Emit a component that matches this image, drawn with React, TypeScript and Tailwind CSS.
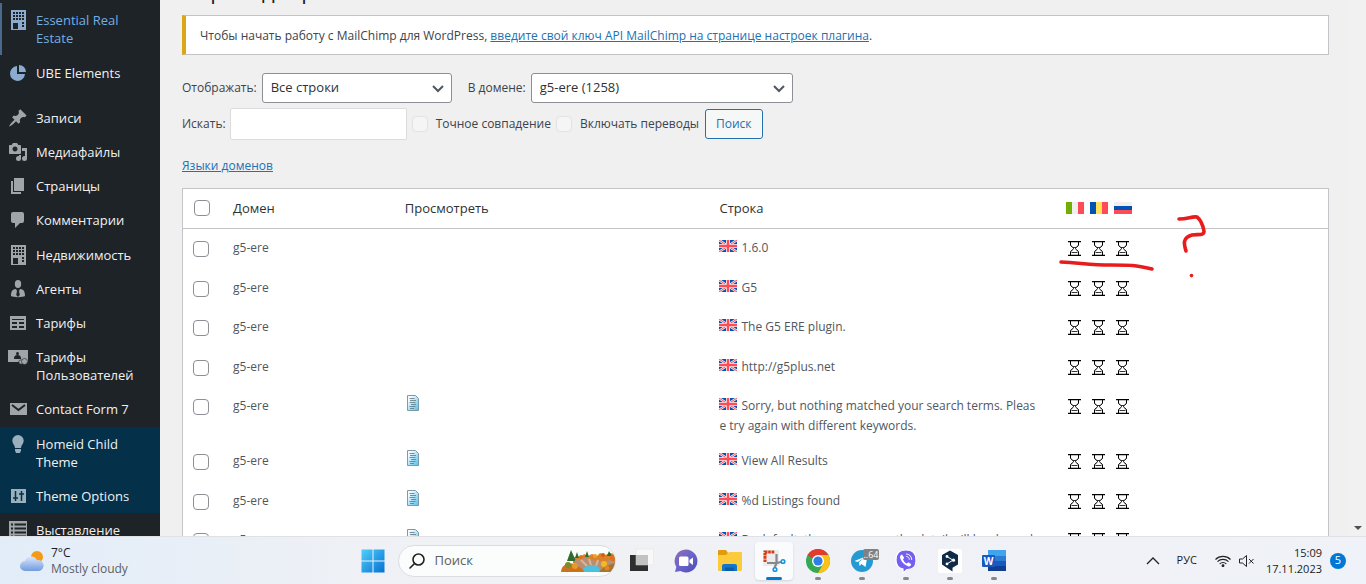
import React from "react"

type IconProps = { className?: string }

const BuildingIcon = ({ className }: IconProps) => (
  <svg viewBox="0 0 20 20" className={className} fill="currentColor" fillRule="evenodd">
    <path d="M3 0h15v20H3zM5 2v2h2V2zM8 2v2h2V2zM11 2v2h2V2zM14 2v2h2V2zM5 5v2h2V5zM8 5v2h2V5zM11 5v2h2V5zM14 5v2h2V5zM5 8v2h2V8zM8 8v2h2V8zM11 8v2h2V8zM14 8v2h2V8zM5 13v6h5v-6zM14 12v2h2v-2zM14 15v2h2v-2z" />
  </svg>
)

const PieIcon = ({ className }: IconProps) => (
  <svg viewBox="0 0 20 20" className={className} fill="currentColor">
    <path d="M9 3v8h8a7.500 7.500 0 1 1-8-8z" />
    <path d="M11 2a7 7 0 0 1 7 7h-7z" />
  </svg>
)

const PinIcon = ({ className }: IconProps) => (
  <svg viewBox="0 0 20 20" className={className} fill="currentColor">
    <path d="M10.440 3.020l1.820-1.820 6.360 6.350-1.830 1.820c-1.050-.680-2.480-.570-3.410.360l-.750.750c-.920.930-1.040 2.350-.350 3.410l-1.830 1.820-2.410-2.410-2.800 2.790c-.420.420-3.380 2.710-3.800 2.290s1.860-3.390 2.280-3.810l2.790-2.790L4.100 9.360l1.830-1.820c1.050.690 2.480.570 3.400-.360l.750-.750c.930-.920 1.050-2.350.360-3.410z" />
  </svg>
)

const MediaIcon = ({ className }: IconProps) => (
  <svg viewBox="0 0 20 20" className={className} fill="currentColor" fillRule="evenodd">
    <path d="M13 11V4c0-.550-.450-1-1-1h-1.670L9 1H5L3.670 3H2c-.550 0-1 .450-1 1v7c0 .550.450 1 1 1h10c.550 0 1-.450 1-1zM7 4.500c1.380 0 2.500 1.120 2.500 2.500S8.380 9.500 7 9.500 4.500 8.380 4.500 7 5.620 4.500 7 4.500z" />
    <path d="M14 6h5v10.500a2.500 2.500 0 1 1-2.500-2.500c.170 0 .340.020.500.050V9h-3z" />
    <path d="M13 13.050V14v2.500A2.500 2.500 0 1 1 10.500 14c.170 0 .340.020.500.050V13z" />
  </svg>
)

const PagesIcon = ({ className }: IconProps) => (
  <svg viewBox="0 0 20 20" className={className} fill="currentColor">
    <path d="M6 15V2h10v13zM5 16h8v2H3V5h2z" />
  </svg>
)

const CommentIcon = ({ className }: IconProps) => (
  <svg viewBox="0 0 20 20" className={className} fill="currentColor">
    <path d="M5 2h9q2 0 2 2v7q0 2-2 2h-2l-5 5v-5H5q-2 0-2-2V4q0-2 2-2z" />
  </svg>
)

const AgentIcon = ({ className }: IconProps) => (
  <svg viewBox="0 0 20 20" className={className} fill="currentColor">
    <ellipse cx="10" cy="5" rx="3.200" ry="4" />
    <path d="M3 17c0-4 1-7 5-7l1 2-.800 4L10 18l1.800-2L11 12l1-2c4 0 5 3 5 7-2 1.500-12 1.500-14 0z" />
  </svg>
)

const TableIcon = ({ className }: IconProps) => (
  <svg viewBox="0 0 20 20" className={className} fill="currentColor" fillRule="evenodd">
    <path d="M2 3h16v14H2zM4 6v1h12V6zM4 9v2h5V9zM11 9v2h5V9zM4 13v2h5v-2zM11 13v2h5v-2z" />
  </svg>
)

const UserCardIcon = ({ className }: IconProps) => (
  <svg viewBox="0 0 20 20" className={className}>
    <path fill="currentColor" d="M0 3h20v12H0z" />
    <circle cx="9.500" cy="6.500" r="1.500" fill="#1d2327" />
    <path fill="#1d2327" d="M6 12c0-3 1-4 3.500-4S13 9 13 12z" />
    <circle cx="13" cy="15" r="2.200" fill="currentColor" stroke="#1d2327" strokeWidth="0.600" />
    <circle cx="16.500" cy="14.500" r="3" fill="currentColor" stroke="#1d2327" strokeWidth="0.600" />
  </svg>
)

const MailIcon = ({ className }: IconProps) => (
  <svg viewBox="0 0 20 20" className={className}>
    <rect x="2" y="4" width="17" height="12" fill="currentColor" />
    <path d="M4 6l6.500 5L17 6" fill="none" stroke="#1d2327" strokeWidth="2" />
  </svg>
)

const BulbIcon = ({ className }: IconProps) => (
  <svg viewBox="0 0 20 20" className={className} fill="currentColor">
    <path d="M10 1a5.700 5.700 0 0 1 5.700 5.700c0 3-2.700 4.300-2.700 7.300H7c0-3-2.700-4.300-2.700-7.300A5.700 5.700 0 0 1 10 1zM7 15h6v1.500l-1 2.500H8l-1-2.500z" />
  </svg>
)

const SlidersIcon = ({ className }: IconProps) => (
  <svg viewBox="0 0 20 20" className={className}>
    <path fill="currentColor" d="M3 3h15v14H3z" />
    <path d="M7.500 5v10M5 12h5M13.500 5v10M11 8h5" fill="none" stroke="#043149" strokeWidth="1.500" />
  </svg>
)

const ListIcon = ({ className }: IconProps) => (
  <svg viewBox="0 0 20 20" className={className}>
    <path fill="currentColor" d="M1 1h18v18H1z" />
    <path d="M3 4.500h2M3 8.500h2M3 12.500h2M3 16.500h2M6.500 4.500H18M6.500 8.500H18M6.500 12.500H18M6.500 16.500H18" stroke="#1d2327" strokeWidth="2" />
  </svg>
)

interface MenuItem {
  label: string
  icon: React.FC<IconProps>
  link?: string
  iconColor?: string
  row?: string
}

const menu: MenuItem[] = [
  { label: "Essential Real Estate", icon: BuildingIcon, link: "text-[#72aee6]", iconColor: "text-[#8bacce]", row: "border-l-2 border-[#4a6a8c]" },
  { label: "UBE Elements", icon: PieIcon, iconColor: "text-[#8bacce]", row: "mt-px mb-[11px]" },
  { label: "Записи", icon: PinIcon },
  { label: "Медиафайлы", icon: MediaIcon },
  { label: "Страницы", icon: PagesIcon },
  { label: "Комментарии", icon: CommentIcon },
  { label: "Недвижимость", icon: BuildingIcon, row: "mt-px" },
  { label: "Агенты", icon: AgentIcon },
  { label: "Тарифы", icon: TableIcon },
  { label: "Тарифы Пользователей", icon: UserCardIcon },
  { label: "Contact Form 7", icon: MailIcon },
  { label: "Homeid Child Theme", icon: BulbIcon, iconColor: "text-[#9ab1bd]", row: "mt-px bg-[#043149]" },
  { label: "Theme Options", icon: SlidersIcon, iconColor: "text-[#9ab1bd]", row: "bg-[#043149]" },
  { label: "Выставление счетов", icon: ListIcon }
]

const Sidebar = () => (
  <nav className="w-40 shrink-0 overflow-hidden bg-[#1d2327] pt-[3px]">
    <ul>
      {menu.map(({ label, icon: Icon, link, iconColor, row }, i) => (
        <li key={i} className={row}>
          <a
            href="#"
            className={`flex gap-2 py-2 pr-4 text-[13px] leading-[18px] ${i === 0 ? "pl-1.5" : "pl-2"} ${link ?? "text-[#f0f0f1]"}`}
          >
            <Icon className={`-my-px size-5 shrink-0 ${iconColor ?? "text-[#a0a5aa]"}`} />
            <span>{label}</span>
          </a>
        </li>
      ))}
    </ul>
  </nav>
)

const UkFlag = () => (
  <svg viewBox="0 0 18 12" className="mr-1 inline-block h-3 w-[18px] align-baseline">
    <path fill="#0052b4" d="M0 0h18v12H0z" />
    <path d="M0 0l18 12M18 0L0 12" stroke="#f0f0f0" strokeWidth="2.400" />
    <path d="M0 0l18 12M18 0L0 12" stroke="#ff4b55" strokeWidth="1" />
    <path d="M9 0v12M0 6h18" stroke="#f0f0f0" strokeWidth="4" />
    <path d="M9 0v12M0 6h18" stroke="#ff4b55" strokeWidth="2.400" />
  </svg>
)

const Hourglass = () => (
  <svg viewBox="0 0 13 15" className="h-[15px] w-[13px]" fill="none" stroke="#000">
    <path d="M0 .5h13M0 14.500h13" strokeWidth="1.300" />
    <path d="M2.500 1v3c0 1.500 3 2 3 3.500s-3 2-3 3.500v3M10.500 1v3c0 1.500-3 2-3 3.500s3 2 3 3.500v3" />
    <path d="M3.500 11.500h6M5 6.500h3" strokeWidth="0.800" />
  </svg>
)

const DocIcon = () => (
  <svg viewBox="0 0 12 16" className="h-4 w-3">
    <defs>
      <linearGradient id="doc" x1="0" y1="0" x2="1" y2="1">
        <stop offset="0.200" stopColor="#f4fbfe" />
        <stop offset="1" stopColor="#4dbdf0" />
      </linearGradient>
    </defs>
    <path d="M.5.5h8l3 3v12H.5z" fill="url(#doc)" stroke="#7d9ba6" />
    <path d="M2.500 3.500h5M3 5.500h6M2.500 7.500h6M4 9.500h5M2.500 11.500h6M3 13.500h4" stroke="#5c7782" strokeWidth="0.800" />
  </svg>
)

const FlagButton = ({ title, colors, column }: { title: string; colors: string[]; column?: boolean }) => (
  <span title={title} className={`flex h-3 w-[18px] ${column ? "flex-col" : ""}`}>
    {colors.map((c) => (
      <span key={c} className={`flex-1 ${c}`} />
    ))}
  </span>
)

const checkbox = "block size-4 appearance-none rounded-[4px] border border-[#8c8f94] bg-white"

interface Row {
  text: string
  height: string
  view?: boolean
}

const rows: Row[] = [
  { text: "1.6.0", height: "h-[41px]" },
  { text: "G5", height: "h-[39px]" },
  { text: "The G5 ERE plugin.", height: "h-10" },
  { text: "http://g5plus.net", height: "h-[39px]" },
  { text: "Sorry, but nothing matched your search terms. Please try again with different keywords.", height: "h-[55px]", view: true },
  { text: "View All Results", height: "h-10", view: true },
  { text: "%d Listings found", height: "h-[39px]", view: true },
  { text: "By default, the message on the detail will be shown last", height: "h-10", view: true }
]

const StringsTable = () => (
  <div className="relative mt-3 border border-[#c3c4c7] bg-white">
    <table className="w-full table-fixed text-left">
      <thead>
        <tr className="h-[39px] border-b border-[#c3c4c7] text-[13px] text-[#2c3338]">
          <th className="w-10 pl-[11px]">
            <input type="checkbox" aria-label="Выбрать все" className={checkbox} />
          </th>
          <th className="w-[15%] pl-2.5 font-normal">Домен</th>
          <th className="w-[27.4%] pl-2.5 font-normal">Просмотреть</th>
          <th className="w-[30.3%] pl-[11px] font-normal">Строка</th>
          <th className="pl-[11px]">
            <div className="flex gap-1.5">
              <FlagButton title="Итальянский" colors={["bg-[#73af00]", "bg-[#f0f0f0]", "bg-[#ff4b55]"]} />
              <FlagButton title="Румынский" colors={["bg-[#0052b4]", "bg-[#ffe15a]", "bg-[#ff4b55]"]} />
              <FlagButton title="Русский" column colors={["bg-[#f0f0f0]", "bg-[#0052b4]", "bg-[#ff4b55]"]} />
            </div>
          </th>
        </tr>
      </thead>
      <tbody>
        {rows.map((row, i) => (
          <tr key={i} className={`align-top text-xs leading-5 text-[#50575e] ${row.height}`}>
            <td className="pt-3 pl-2.5">
              <input type="checkbox" aria-label={row.text} className={checkbox} />
            </td>
            <td className="pt-[9px] pl-2.5">g5-ere</td>
            <td className="pt-2 pl-3">{row.view && <DocIcon />}</td>
            <td className="pt-[9px] pr-4 pb-1.5 pl-[11px] break-all">
              <UkFlag />
              {row.text}
            </td>
            <td className="pt-3 pl-[13px]">
              <div className="flex gap-[11px]">
                <Hourglass />
                <Hourglass />
                <Hourglass />
              </div>
            </td>
          </tr>
        ))}
      </tbody>
    </table>
    {/* red pen marks over the language columns */}
    <svg
      viewBox="0 0 160 80"
      className="pointer-events-none absolute top-[19px] left-[76.400%] h-20 w-40"
      fill="none"
      stroke="#e81c1c"
      strokeWidth="3.600"
      strokeLinecap="round"
      strokeLinejoin="round"
    >
      <path d="M3 54c20 1 30 3 50 3s24 0 41 4" />
      <path d="M121 11c9 0 13-3 18-2 4 3 6 9 7 14 0 5-5 3-12 4-10 3-8 9-6 16" />
      <path d="M133.500 67.500v.1" />
    </svg>
  </div>
)

const SelectBox = ({ id, value, width }: { id: string; value: string; width: string }) => (
  <div className={`relative ml-[5px] ${width}`}>
    <select
      id={id}
      className="h-[30px] w-full appearance-none rounded-[3px] border border-[#8c8f94] bg-white pr-6 pl-2 text-[13px] text-[#2c3338]"
    >
      <option>{value}</option>
    </select>
    <svg viewBox="0 0 12 8" className="pointer-events-none absolute top-3 right-2 h-2 w-3" fill="none" stroke="#50575e" strokeWidth="2">
      <path d="M1 1l5 5 5-5" />
    </svg>
  </div>
)

const Filters = () => (
  <form className="mt-[18px] text-xs text-[#3c434a]">
    <div className="flex items-center">
      <label htmlFor="show">Отображать:</label>
      <SelectBox id="show" value="Все строки" width="w-[190px]" />
      <label htmlFor="domain" className="ml-4">
        В домене:
      </label>
      <SelectBox id="domain" value="g5-ere (1258)" width="w-[262px]" />
    </div>
    <div className="mt-[5px] flex items-center">
      <label htmlFor="search">Искать:</label>
      <input id="search" type="text" className="ml-1 h-8 w-[177px] rounded-[2px] border border-[#dcdcde] bg-white px-2" />
      <input id="exact" type="checkbox" disabled className="ml-[5px] size-4 appearance-none rounded-[4px] border border-[#e3e3e5] bg-[#f5f5f5]" />
      <label htmlFor="exact" className="ml-2">
        Точное совпадение
      </label>
      <input id="translations" type="checkbox" disabled className="ml-[5px] size-4 appearance-none rounded-[4px] border border-[#e3e3e5] bg-[#f5f5f5]" />
      <label htmlFor="translations" className="ml-2">
        Включать переводы
      </label>
      <button type="button" className="ml-1.5 h-[30px] rounded-[3px] border border-[#2271b1] bg-[#f6f7f7] px-2.5 text-[#2271b1]">
        Поиск
      </button>
    </div>
  </form>
)

const TaskButton = ({ label, active, running, children }: { label: string; active?: boolean; running?: boolean; children: React.ReactNode }) => (
  <div className="relative flex w-11 justify-center">
    <button
      aria-label={label}
      className={`flex h-[38px] w-[38px] items-center justify-center rounded ${active ? "bg-[#fafbfd] shadow-sm" : ""}`}
    >
      <svg viewBox="0 0 24 24" className="size-6 overflow-visible">
        {children}
      </svg>
    </button>
    {active && <span className="absolute bottom-0 h-[3px] w-4 rounded-full bg-[#0078d4]" />}
    {running && <span className="absolute bottom-0 h-[3px] w-1.5 rounded-full bg-[#868788]" />}
  </div>
)

const Landscape = () => (
  <svg viewBox="0 0 54 24" className="h-6 w-[54px]">
    <path d="M12 9l4-2 4 1 3-3 4 2 4-2 5 2 3-3 5 2 5-2 5 1v9H12z" fill="#d9822a" />
    <path d="M6 12l4-11 5 11zM14 9l2-6 2 6zM24 8l2-6 2 6zM46 7l2-5 3 5z" fill="#2f6b2c" />
    <path d="M14 11q10-4 18 0t22-2v14H16z" fill="#b98f74" />
    <path d="M20 11l6 6M28 10l2 6M37 11l-2 6" stroke="#d9b598" strokeWidth="2" />
    <path d="M20 23q3-7 12-7 6 0 8 7z" fill="#4cc0dc" />
    <path d="M0 23q0-6 6-8 8-2 12 3 4 1 5 5z" fill="#c9731f" />
    <circle cx="7" cy="16" r="3" fill="#7c8a2a" />
    <circle cx="14" cy="17" r="3" fill="#e99a26" />
    <circle cx="20" cy="8" r="2" fill="#e0701c" />
    <circle cx="34" cy="7" r="2" fill="#f2a01e" />
    <circle cx="42" cy="6" r="2" fill="#d85a1a" />
    <path d="M38 23q4-6 16-9l-4 9z" fill="#a8742c" />
    <circle cx="43" cy="15" r="3" fill="#f4b91f" />
    <circle cx="46" cy="19" r="2.500" fill="#e0862a" />
    <circle cx="52" cy="9" r="3" fill="#e0701c" />
  </svg>
)

const Taskbar = () => (
  <footer className="flex h-12 shrink-0 items-center border-t border-[#dfe1e5] bg-linear-to-r from-[#e2edf9] via-[#f0f1f5] via-30% to-[#eff2f8] text-[11px] text-[#1b1b1b]">
    <div className="flex flex-1 items-center gap-2 pl-5">
      <svg viewBox="0 0 24 22" className="h-[22px] w-6">
        <defs>
          <linearGradient id="cloud" x1="0" y1="0" x2="0" y2="1">
            <stop offset="0" stopColor="#dbe8fa" />
            <stop offset="1" stopColor="#719be0" />
          </linearGradient>
        </defs>
        <circle cx="17" cy="7" r="6" fill="#f59a16" />
        <path d="M5 21a5 5 0 0 1 0-10 6.500 6.500 0 0 1 12-1 5.500 5.500 0 0 1 2 11z" fill="url(#cloud)" />
      </svg>
      <div className="-ml-px text-xs leading-4">
        <div>7°C</div>
        <div className="text-[#5a5f66]">Mostly cloudy</div>
      </div>
    </div>
    <div className="flex items-center">
      <TaskButton label="Пуск">
        <defs>
          <linearGradient id="win" x1="0" y1="0" x2="1" y2="1">
            <stop offset="0" stopColor="#4fd0fb" />
            <stop offset="1" stopColor="#0670d1" />
          </linearGradient>
        </defs>
        <path d="M.5.500h11v11H.5zM12.500.500h11v11h-11zM.5 12.500h11v11H.5zM12.500 12.500h11v11h-11z" fill="url(#win)" />
      </TaskButton>
      <div className="mr-1 ml-[3px] flex h-8 w-[218px] items-center overflow-hidden rounded-full border border-[#dcdde0] bg-[#fbfcfc] pl-2.5">
        <svg viewBox="0 0 16 16" className="size-4 shrink-0" fill="none" stroke="#222" strokeWidth="1.600">
          <circle cx="9.500" cy="6.500" r="5.500" />
          <path d="M5.500 10.500L1 15" strokeLinecap="round" />
        </svg>
        <input aria-label="Поиск" placeholder="Поиск" className="ml-2.5 w-0 flex-1 bg-transparent text-[13px] placeholder:text-[#606060]" />
        <Landscape />
      </div>
      <TaskButton label="Представление задач">
        <path d="M0 6h18v16H0z" fill="#2e2e2e" />
        <path d="M6 0h17.500v16H6z" fill="#f8f8f8" stroke="#e2e2e2" strokeWidth="0.500" />
        <path d="M6 6h12v10H6z" fill="#c2c2c2" />
      </TaskButton>
      <TaskButton label="Чат">
        <defs>
          <linearGradient id="chat" x1="0" y1="0" x2="1" y2="1">
            <stop offset="0" stopColor="#8f6fb5" />
            <stop offset="0.500" stopColor="#6a63c9" />
            <stop offset="1" stopColor="#4b4fb8" />
          </linearGradient>
        </defs>
        <path d="M12 .5a11.500 11.500 0 1 1-5.500 21.600L1 23l1.300-5A11.500 11.500 0 0 1 12 .5z" fill="url(#chat)" />
        <rect x="5" y="7.500" width="9.500" height="9.500" rx="1.500" fill="#fff" />
        <path d="M15.500 11l3.500-2.500v7.500l-3.500-2.500z" fill="#fff" />
      </TaskButton>
      <TaskButton label="Проводник">
        <path d="M0 2q0-1 1-1h7l2 3v4H0z" fill="#e19b0b" />
        <path d="M0 6h8l3-3h12q1 0 1 1v17q0 1-1 1H1q-1 0-1-1z" fill="#fccb3b" />
        <path d="M4 22v-5q0-2 2-2h11q2 0 2 2v5z" fill="#1277cb" />
        <path d="M7 18.500h9v3.500H7z" fill="#0b5aa5" />
      </TaskButton>
      <TaskButton label="Ножницы" active>
        <path d="M1 1h16v16H1z" fill="#ececee" />
        <path d="M3 13V3h10" fill="none" stroke="#d83b10" strokeWidth="3" strokeDasharray="2.600 .7" />
        <path d="M14.500 5v9l-2 5M5 14h10l4-1" fill="none" stroke="#85898d" strokeWidth="2.200" />
        <circle cx="13" cy="20.500" r="1.800" fill="#fff" stroke="#1694dc" strokeWidth="1.600" />
        <circle cx="21" cy="12.500" r="1.800" fill="#fff" stroke="#1694dc" strokeWidth="1.600" />
      </TaskButton>
      <TaskButton label="Chrome" running>
        <circle cx="12" cy="12" r="12" fill="#34a853" />
        <path d="M12 12L1.600 6A12 12 0 0 1 22.400 6z" fill="#e33b2e" />
        <path d="M12 6h10.400A12 12 0 0 1 12 24l5.200-9z" fill="#fbc116" />
        <path d="M12 12V6H1.600" fill="#e33b2e" />
        <circle cx="12" cy="12" r="6" fill="#fff" />
        <circle cx="12" cy="12" r="4.600" fill="#2f7de9" />
      </TaskButton>
      <TaskButton label="Telegram" running>
        <circle cx="12" cy="12" r="11" fill="#2499d2" />
        <path d="M4.500 12l13-5.300-2 11.300-4-3-2 2-.5-4 6-4.500-7.500 4.500z" fill="#fff" />
        <rect x="13" y="0" width="16" height="11" rx="2" fill="#818181" />
        <text x="21" y="9" textAnchor="middle" fontSize="9" fill="#fff">
          ..64
        </text>
      </TaskButton>
      <TaskButton label="Viber" running>
        <path d="M12 1c7 0 10 3 10 10s-3 9.500-9 9.500L9 24v-4C4 19 2 16 2 11 2 4 5 1 12 1z" fill="#7360f2" stroke="#fff" strokeWidth="1.200" />
        <path d="M8 5.500c-2 1-2.500 2-1.500 4.500 1.500 3.500 4 6 7.500 7.300 2 .7 3-.5 3.200-2l-2.700-2-1.800 1.200c-2-1-3-2.200-3.700-4.200l1.200-1.500z" fill="#fff" />
        <path d="M12.500 5c3 .3 5 2 5.200 5.500M12.700 7.500c1.700.2 2.500 1.200 2.600 2.800" fill="none" stroke="#fff" strokeLinecap="round" />
      </TaskButton>
      <TaskButton label="DeepL" running>
        <rect width="24" height="24" rx="2" fill="#fff" />
        <path d="M12 1.500l8 4.600v9.400l-5.500 3.200V22.500L4 15.500V6.100z" fill="#0f2b46" />
        <path d="M9 7.500l6 3.700-6 3.700" fill="none" stroke="#fff" />
        <circle cx="9" cy="7.500" r="1.400" fill="#fff" />
        <circle cx="15.500" cy="11.200" r="1.600" fill="#fff" />
        <circle cx="9" cy="14.900" r="1.400" fill="#fff" />
      </TaskButton>
      <TaskButton label="Word" running>
        <path d="M6 1h18v6H6z" fill="#41a5ee" />
        <path d="M6 7h18v5H6z" fill="#2b7cd3" />
        <path d="M6 12h18v5H6z" fill="#185abd" />
        <path d="M6 17h18v5H6z" fill="#103f91" />
        <rect x="0" y="6" width="13" height="12" rx="1" fill="#185abd" />
        <text x="6.500" y="15.500" textAnchor="middle" fontSize="10" fontWeight="bold" fill="#fff">
          W
        </text>
      </TaskButton>
    </div>
    <div className="flex flex-1 items-center justify-end pr-5">
      <svg viewBox="0 0 14 8" className="mr-[17px] h-2 w-3.5" fill="none" stroke="#222" strokeWidth="1.300">
        <path d="M1 7l6-6 6 6" />
      </svg>
      <span className="mr-[18px]">РУС</span>
      <svg viewBox="0 0 16 12" className="mr-2 h-3 w-4" fill="none" stroke="#222" strokeWidth="1.100">
        <path d="M.5 4.500a10.500 10.500 0 0 1 15 0M2.500 6.700a7.700 7.700 0 0 1 11 0M4.700 8.900a4.600 4.600 0 0 1 6.600 0" />
        <circle cx="8" cy="10.600" r="0.900" fill="#222" />
      </svg>
      <svg viewBox="0 0 16 12" className="mr-[11px] h-3 w-4" fill="none" stroke="#222">
        <path d="M.5 4v4h3L7.500 11.500V.5L3.500 4zM10 4l4.500 4.500M14.500 4L10 8.500" />
      </svg>
      <div className="mr-2 text-right leading-4">
        <div>15:09</div>
        <div>17.11.2023</div>
      </div>
      <span className="flex size-4 items-center justify-center rounded-full bg-[#0078d4] text-[11px] text-white">5</span>
    </div>
  </footer>
)

export default function App() {
  return (
    <div className="flex h-screen flex-col overflow-hidden bg-[#f0f0f1] font-['Open_Sans','Noto_Sans',sans-serif]">
      <div className="flex min-h-0 flex-1">
        <Sidebar />
        <main className="min-w-0 flex-1 overflow-hidden pr-5 pl-[22px]">
          <h1 className="-mt-[25px] text-[22px] leading-[30px] text-[#1d2327]">Перевод строк</h1>
          <div className="mt-2.5 border border-l-4 border-[#c3c4c7] border-l-[#dba617] bg-white pt-2.5 pb-2 pl-3.5 text-xs leading-5 text-[#3c434a]">
            Чтобы начать работу с MailChimp для WordPress,{" "}
            <a href="#" className="text-[#2271b1] underline">
              введите свой ключ API MailChimp на странице настроек плагина
            </a>
            .
          </div>
          <Filters />
          <a href="#" className="mt-4 block w-fit text-xs leading-5 text-[#2271b1] underline">
            Языки доменов
          </a>
          <StringsTable />
        </main>
        <div className="flex w-[17px] shrink-0 flex-col justify-end bg-[#f1f1f1] pb-1.5">
          <svg viewBox="0 0 8 4" className="mx-auto h-1 w-2">
            <path d="M0 0h8L4 4z" fill="#505050" />
          </svg>
        </div>
      </div>
      <Taskbar />
    </div>
  )
}
